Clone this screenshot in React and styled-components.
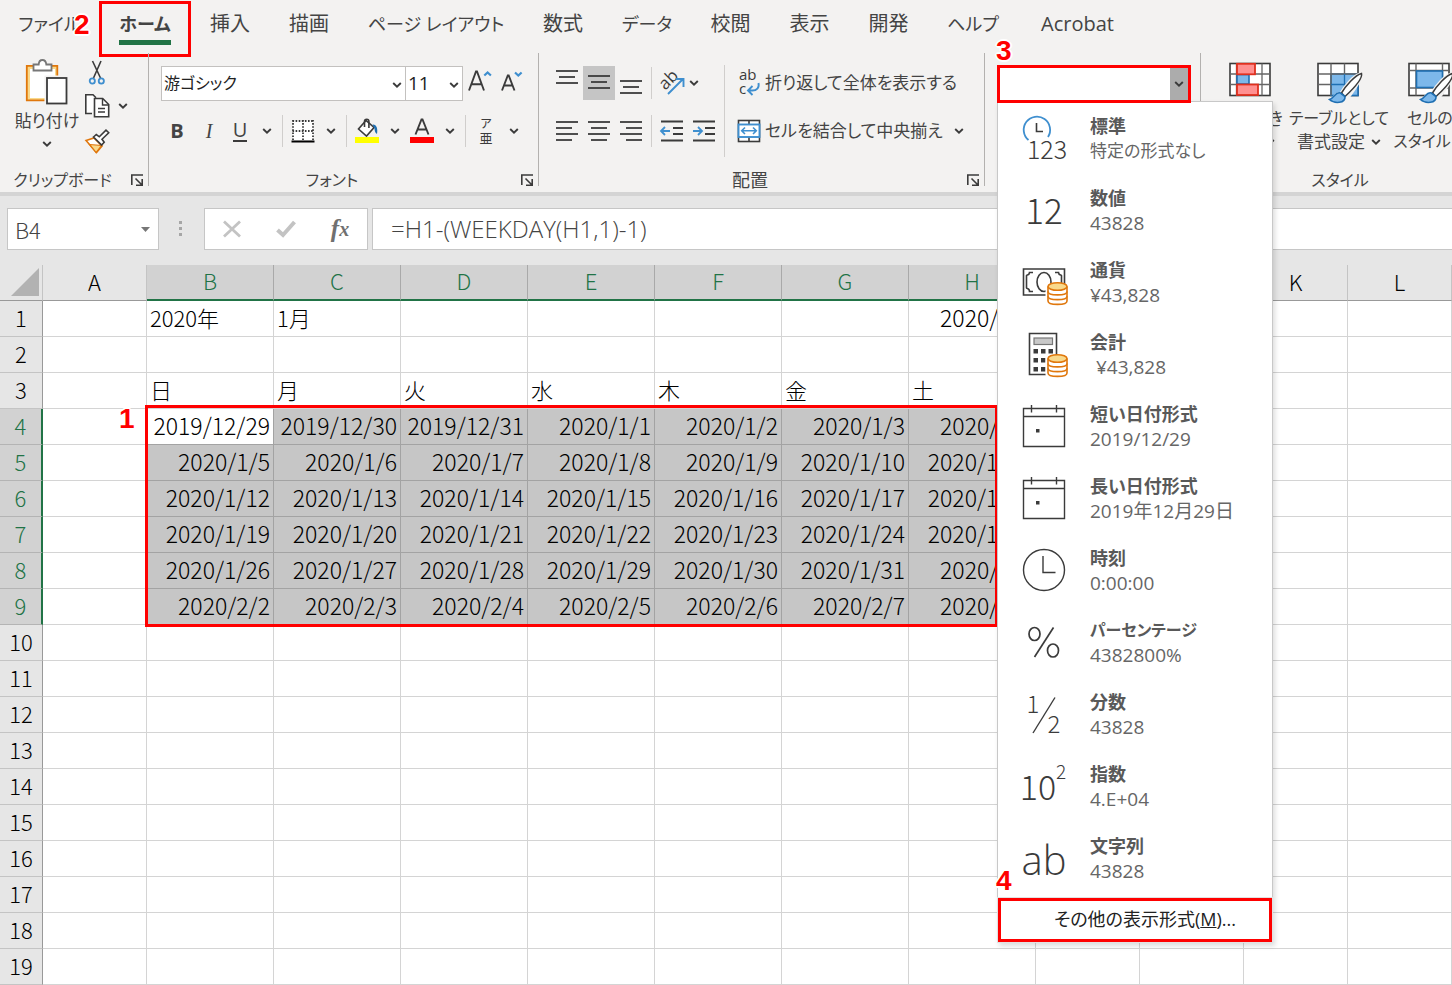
import React from "react";
import styled, { createGlobalStyle, css } from "styled-components";

const INK = "#3b3b3b";
const BLUE = "#3f8fcf";
const GREEN = "#217346";
const RED = "#ff0000";

const uiFont = `"Open Sans", "Noto Sans CJK JP", sans-serif`;
const sheetFont = `"Noto Sans CJK JP", sans-serif`;

const GlobalStyle = createGlobalStyle`
  *, *::before, *::after { box-sizing: border-box; }
  body { margin: 0; background: #fff; }
  button, input, select { font: inherit; color: inherit; margin: 0; font-feature-settings: inherit; }
`;

const Page = styled.div`
  min-height: 100vh;
  overflow: hidden;
  display: flex;
  flex-direction: column;
  background: #fff;
  color: #444;
  font-family: ${uiFont};
  font-feature-settings: "palt";
  font-size: 17px;
  line-height: 24px;
`;

/* ---------- annotations ---------- */

const StepNumber = styled.span`
  position: absolute;
  z-index: 6;
  left: ${(p) => p.$left};
  top: ${(p) => p.$top};
  font: bold 28px/28px "Liberation Sans", sans-serif;
  color: ${RED};
  text-shadow: 2px 0 #fff, -2px 0 #fff, 0 2px #fff, 0 -2px #fff, 1px 1px #fff, -1px -1px #fff,
    1px -1px #fff, -1px 1px #fff;
  pointer-events: none;
`;

/* ---------- ribbon ---------- */

const Ribbon = styled.header`
  background: #f3f2f1;
  border-bottom: 4px solid #d4d4d4;
`;

const TabBar = styled.nav`
  display: flex;
  height: 53px;
`;

const Tab = styled.button`
  position: relative;
  flex: none;
  width: ${(p) => p.$width}px;
  height: 48px;
  padding: 0;
  border: 0;
  background: none;
  font-size: ${(p) => (p.$kana ? 18 : 20)}px;
  line-height: 48px;
  white-space: nowrap;
  display: flex;
  justify-content: center;
  ${(p) =>
    p.$active &&
    css`
      font-weight: 700;
      &::before {
        content: "";
        position: absolute;
        left: 20px;
        right: 20px;
        top: 40px;
        height: 5px;
        background: ${GREEN};
      }
      &::after {
        content: "";
        position: absolute;
        inset: 1px 0 -9px 0;
        border: 3px solid ${RED};
      }
    `}
`;

const Groups = styled.div`
  display: flex;
  height: 139px;
`;

const Group = styled.section`
  position: relative;
  flex: none;
  width: ${(p) => p.$width}px;
  display: flex;
  flex-direction: column;
  &::after {
    content: "";
    position: absolute;
    right: 0;
    top: 0;
    height: 133px;
    width: 1px;
    background: ${(p) => (p.$last ? "transparent" : "#b3b1af")};
  }
`;

const GroupBody = styled.div`
  flex: 1;
  min-height: 0;
  display: flex;
  align-items: flex-start;
  padding: ${(p) => p.$pad || "0"};
`;

const GroupFooter = styled.div`
  display: flex;
  align-items: center;
  height: 24px;
  line-height: 24px;
`;

const GroupName = styled.span`
  flex: 1;
  text-align: center;
  font-size: ${(p) => (p.$kana ? 16 : 18)}px;
`;

const Launcher = styled.button`
  width: 24px;
  height: 24px;
  padding: 0;
  border: 0;
  background: none;
  display: flex;
  align-items: center;
  justify-content: center;
`;

const Stack = styled.div`
  display: flex;
  flex-direction: column;
  padding-left: ${(p) => p.$indent || 0}px;
`;

const ToolRow = styled.div`
  display: flex;
  align-items: center;
  height: 36px;
  margin-top: ${(p) => p.$gap || 0}px;
`;

const ToolButton = styled.button`
  flex: none;
  width: ${(p) => p.$width || 32}px;
  height: ${(p) => p.$height || 34}px;
  padding: 0;
  border: 0;
  background: ${(p) => (p.$pressed ? "#c5c5c5" : "none")};
  display: flex;
  align-items: center;
  justify-content: center;
  font-size: 20px;
  line-height: 24px;
`;

const Letter = styled.span`
  font-weight: ${(p) => (p.$bold ? 700 : 400)};
  font-style: ${(p) => (p.$italic ? "italic" : "normal")};
  font-family: ${(p) => (p.$italic ? `"Liberation Serif", serif` : "inherit")};
  border-bottom: ${(p) => (p.$underline ? `2px solid ${INK}` : "0")};
  line-height: 20px;
`;

const TextButton = styled.button`
  display: flex;
  align-items: center;
  gap: 4px;
  height: 34px;
  padding: 0;
  border: 0;
  background: none;
  font-size: 17px;
  line-height: 24px;
  white-space: nowrap;
`;

const Divider = styled.span`
  flex: none;
  width: 1px;
  height: ${(p) => p.$height || 32}px;
  margin: 0 4px;
  background: #d0cecc;
`;

const Picker = styled.label`
  position: relative;
  display: flex;
  flex: none;
  width: ${(p) => p.$width}px;
  height: 35px;
  margin-right: ${(p) => p.$after || 0}px;
  margin-left: ${(p) => p.$pull || 0}px;
  border: 1px solid #c3c1bf;
  background: #fff;
  color: #222;
  svg {
    position: absolute;
    right: 3px;
    top: 14px;
    pointer-events: none;
  }
  select {
    appearance: none;
    flex: 1;
    min-width: 0;
    border: 0;
    padding: 0 2px;
    background: none;
    font-size: ${(p) => (p.$kana ? 16 : 19)}px;
  }
`;

const BigButton = styled.button`
  flex: none;
  width: ${(p) => p.$width}px;
  padding: 0;
  border: 0;
  background: none;
  display: flex;
  flex-direction: column;
  align-items: center;
  white-space: nowrap;
  > svg {
    margin-bottom: 4px;
  }
`;

const BigLine = styled.span`
  display: flex;
  align-items: center;
  gap: 6px;
  height: 23px;
  font-size: ${(p) => (p.$kana ? 16 : 17)}px;
  line-height: 23px;
`;

/* ---------- number format box and its menu ---------- */

const FormatBox = styled.div`
  position: relative;
  width: 194px;
  height: 38px;
`;

const FormatField = styled.div`
  display: flex;
  height: 38px;
  border: 3px solid ${RED};
  background: #fff;
  position: relative;
  z-index: 5;
  input {
    flex: 1;
    min-width: 0;
    border: 0;
    padding: 0 4px;
    background: #fff;
    outline: none;
  }
  button {
    width: 18px;
    padding: 0;
    border: 0;
    background: #acacac;
    display: flex;
    align-items: center;
    justify-content: center;
  }
`;

const Menu = styled.div`
  position: absolute;
  z-index: 4;
  left: 0;
  top: 36px;
  width: 276px;
  border: 1px solid #c8c8c8;
  background: #fff;
  box-shadow: 2px 3px 5px rgba(0, 0, 0, 0.14);
`;

const MenuItem = styled.button`
  display: flex;
  align-items: center;
  width: 100%;
  height: 72px;
  padding: 0 0 0 22px;
  border: 0;
  background: none;
  text-align: left;
  svg {
    flex: none;
    margin-right: 22px;
  }
`;

const ItemTitle = styled.span`
  display: block;
  font-family: ${sheetFont};
  font-weight: 700;
  font-size: ${(p) => (p.$kana ? 16 : 18)}px;
  line-height: 26px;
  color: #595959;
`;

const ItemSample = styled.span`
  display: block;
  font-size: ${(p) => (p.$kana ? 17 : 19)}px;
  line-height: 26px;
  padding-left: ${(p) => (p.$indent ? 6 : 0)}px;
  color: #666;
  white-space: nowrap;
`;

const MoreFormats = styled.button`
  display: block;
  width: 100%;
  height: 44px;
  margin-top: 4px;
  padding: 0 0 2px 20px;
  border: 3px solid ${RED};
  background: #fff;
  font-size: 18px;
  color: #222;
  outline: 1px solid #e1e1e1;
`;

/* ---------- formula bar ---------- */

const FormulaBar = styled.div`
  display: flex;
  align-items: center;
  height: 69px;
  padding: 0 0 3px 7px;
  background: #e6e6e6;
  font-family: ${sheetFont};
  font-size: 22px;
  font-weight: 300;
`;

const NameBox = styled.div`
  display: flex;
  align-items: center;
  width: 152px;
  height: 42px;
  padding-right: 8px;
  border: 1px solid #c6c6c6;
  background: #fff;
  input {
    flex: 1;
    min-width: 0;
    padding: 0 0 0 7px;
    border: 0;
    background: none;
    outline: none;
  }
`;

const Grip = styled.span`
  width: 3px;
  height: 16px;
  margin: 0 22px 0 20px;
  background: repeating-linear-gradient(#a6a6a6 0 3px, transparent 3px 6px);
`;

const FormulaTools = styled.div`
  display: flex;
  align-items: center;
  width: 164px;
  height: 42px;
  border: 1px solid #c6c6c6;
  background: #fff;
  button {
    flex: 1;
    height: 40px;
    padding: 0;
    border: 0;
    background: none;
    display: flex;
    align-items: center;
    justify-content: center;
    font: italic bold 25px/36px "Liberation Serif", serif;
    color: #707070;
  }
  small {
    font-size: 20px;
  }
`;

const FormulaInput = styled.input`
  flex: 1;
  min-width: 0;
  height: 42px;
  margin-left: 4px;
  padding: 0 18px 2px;
  border: 1px solid #c6c6c6;
  border-right: 0;
  background: #fff;
  outline: none;
  && {
    font-family: ${uiFont};
    font-size: 24px;
  }
`;

/* ---------- sheet ---------- */

const SheetArea = styled.main`
  position: relative;
`;

const Sheet = styled.table`
  width: 100%;
  table-layout: fixed;
  border-collapse: separate;
  border-spacing: 0;
  font-family: ${sheetFont};
  font-feature-settings: normal;
  font-size: 22px;
  font-weight: 300;
  line-height: 30px;
  color: #000;
  td,
  th {
    height: 36px;
    padding: 0 3px 4px;
    white-space: nowrap;
    font-weight: 300;
  }
`;

const ColumnHead = styled.th`
  border-right: 1px solid ${(p) => (p.$on ? "#a9a9a9" : "#c4c4c4")};
  border-bottom: ${(p) => (p.$on ? `2px solid ${GREEN}` : "1px solid #999")};
  background: ${(p) => (p.$on ? "#d2d2d2" : "#e6e6e6")};
  color: ${(p) => (p.$on ? GREEN : "#000")};
`;

const RowHead = styled.th`
  border-right: ${(p) => (p.$on ? `2px solid ${GREEN}` : "1px solid #999")};
  border-bottom: 1px solid ${(p) => (p.$on ? "#b4b4b4" : "#c4c4c4")};
  background: ${(p) => (p.$on ? "#d2d2d2" : "#e6e6e6")};
  color: ${(p) => (p.$on ? GREEN : "#000")};
`;

const Corner = styled.th`
  border-right: 1px solid #c4c4c4;
  border-bottom: 1px solid #999;
  background: #e6e6e6;
  vertical-align: bottom;
  svg {
    display: block;
    margin-left: auto;
  }
`;

const Cell = styled.td`
  border-right: 1px solid ${(p) => (p.$picked ? "#a3a3a3" : "#d4d4d4")};
  border-bottom: 1px solid ${(p) => (p.$picked ? "#a3a3a3" : "#d4d4d4")};
  background: ${(p) => (p.$picked && !p.$current ? "#c6c6c6" : "#fff")};
  text-align: ${(p) => (p.$date ? "right" : "left")};
  font-size: ${(p) => (p.$date ? 23 : 22)}px;
`;

const RangeFrame = styled.div`
  position: absolute;
  left: 145px;
  top: 140px;
  width: 853px;
  height: 222px;
  border: 3px solid ${RED};
  pointer-events: none;
`;

/* ---------- icons ---------- */

const Drawing = styled.svg`
  flex: none;
  overflow: visible;
`;

const Icon = ({ w, h, children, ...rest }) => (
  <Drawing width={w} height={h} viewBox={`0 0 ${w} ${h}`} fill="none" stroke={INK} strokeWidth="1.6" aria-hidden="true" {...rest}>
    {children}
  </Drawing>
);

const Chevron = () => (
  <Icon w={10} h={8} strokeWidth="1.9">
    <path d="M1.2 2l3.8 3.7L8.8 2" />
  </Icon>
);

const LauncherIcon = () => (
  <Icon w={14} h={14}>
    <path d="M1.8 12V2H13M5.500 5.500l6 6M12.200 6v6.200H6" />
  </Icon>
);

const PasteIcon = () => (
  <Icon w={44} h={47}>
    <rect x="3.500" y="9.500" width="28" height="32" fill="#fff" stroke="#f9d98b" strokeWidth="3" />
    <path d="M9 7.800H1.800v34.500h18M26 7.800h6.300V19" stroke="#e0770c" strokeWidth="1.800" />
    <path d="M8.500 12.500v-6h5.200c.4-6 7-6 7.600 0h5.200v6z" fill="#fff" stroke="#777" strokeWidth="1.800" />
    <rect x="19.500" y="17.500" width="24" height="29.500" fill="#f3f2f1" stroke="none" />
    <rect x="22" y="20" width="19.500" height="25.500" fill="#fff" strokeWidth="1.800" />
  </Icon>
);

const ScissorsIcon = () => (
  <Icon w={18} h={26}>
    <path d="M4.500 1l8 17M13 1L5.500 18" />
    <circle cx="4.300" cy="21" r="2.600" stroke={BLUE} strokeWidth="1.800" />
    <circle cx="13.300" cy="21" r="2.600" stroke={BLUE} strokeWidth="1.800" />
  </Icon>
);

const CopyIcon = () => (
  <Icon w={26} h={26}>
    <path d="M8 20.500H1.800V1.800H9l3 3" fill="#fff" />
    <path d="M10.500 5.500h8.200l6 6V23.700h-14.200z" fill="#fff" />
    <path d="M18.500 6v6h6M14 15.500h7M14 19h7" strokeWidth="1.400" />
  </Icon>
);

const PainterIcon = () => (
  <Icon w={26} h={26}>
    <path d="M2 12.500l8-2.500 8 8-5.500 6.500z" fill="#fff" stroke="#e0770c" />
    <path d="M5.500 16.500l12 1-5.500 7z" fill="#f9d98b" stroke="#e0770c" strokeWidth="1.200" />
    <path d="M9.500 9l2.800-2.500 3 2.300L22 2.200l2.700 2.500-6.700 6.600 2.200 3-2.600 2.800z" fill="#fff" />
  </Icon>
);

const GrowIcon = ({ small }) => (
  <Icon w={26} h={28}>
    {small ? (
      <>
        <path d="M3 21.500L8.800 6.500h.9L15.500 21.500M5 16.500h8.500" strokeWidth="1.900" />
        <path d="M16 3.500l3.300 3 3.300-3" stroke={BLUE} strokeWidth="2.200" />
      </>
    ) : (
      <>
        <path d="M2 21.500L9 2.500h1l7 19M4.500 15.200h10" strokeWidth="1.900" />
        <path d="M17.300 6.500l3.300-3 3.300 3" stroke={BLUE} strokeWidth="2.200" />
      </>
    )}
  </Icon>
);

const BordersIcon = () => (
  <Icon w={24} h={24}>
    <rect x="2" y="2" width="20" height="19" fill="#fff" stroke="none" />
    <path d="M1.500 2h21M1.500 12h21M2 1v20M12 1v20M22 1v20" strokeWidth="1.800" strokeDasharray="1.600 1.500" />
    <path d="M.5 22.500h23" stroke="#000" strokeWidth="2" />
  </Icon>
);

const FillIcon = () => (
  <Icon w={26} h={26}>
    <path d="M12 2.500L4.500 11l8 7 7.500-8.500z" fill="#fff" />
    <path d="M10.500 9V3.500a2.200 2.200 0 0 1 4.400 0V10" />
    <path d="M18.500 6.500c4-.5 5.500 4 4.500 9.500-2-1-2.500-4-2.500-5.500z" fill="#1f6fb2" stroke="none" />
    <rect x="1" y="19" width="24" height="6" fill="#ffff00" stroke="none" />
  </Icon>
);

const FontColorIcon = () => (
  <Icon w={26} h={26}>
    <path d="M6.500 16.500L12.500 1.500h1l6 15M8.500 11.500h9" strokeWidth="1.900" />
    <rect x="1" y="19" width="24" height="6" fill="#ff0000" stroke="none" />
  </Icon>
);

const RubyIcon = () => (
  <Icon w={16} h={28}>
    <text x="8" y="11" fontSize="12" textAnchor="middle" fill={INK} stroke="none">ア</text>
    <text x="8" y="26" fontSize="13" textAnchor="middle" fill={INK} stroke="none">亜</text>
  </Icon>
);

const LinesIcon = ({ lines, h = 34 }) => (
  <Icon w={24} h={h} strokeWidth="1.800">
    {lines.map(([x1, x2, y]) => (
      <path key={y} d={`M${x1} ${y}H${x2}`} />
    ))}
  </Icon>
);

const OrientationIcon = () => (
  <Icon w={28} h={30}>
    <text x="2" y="20" fontSize="17" fill={INK} stroke="none" transform="rotate(-45 8 15)">ab</text>
    <path d="M10 26L25 11M17.500 11H25.500v8" stroke={BLUE} strokeWidth="1.900" />
  </Icon>
);

const IndentIcon = ({ out }) => (
  <Icon w={24} h={22} strokeWidth="1.800">
    <path d="M1 1.500h22M13 8h10M13 14h10M1 20.500h22" />
    {out ? (
      <path d="M10 11H1.800M5 7l-4 4 4 4" stroke={BLUE} />
    ) : (
      <path d="M1 11h8.200M6 7l4 4-4 4" stroke={BLUE} />
    )}
  </Icon>
);

const WrapIcon = () => (
  <Icon w={24} h={28}>
    <text x="2" y="11" fontSize="15" fill={INK} stroke="none">ab</text>
    <text x="2" y="25" fontSize="15" fill={INK} stroke="none">c</text>
    <path d="M21.500 14c1 5-2 7.500-6 7.500H12M15.500 17L11 21.500l4.500 4.500" stroke={BLUE} strokeWidth="1.900" />
  </Icon>
);

const MergeIcon = () => (
  <Icon w={24} h={24}>
    <rect x="1.500" y="1.500" width="21" height="21" fill="#fff" />
    <path d="M12 1v5M12 18v5" />
    <rect x="1.500" y="5.500" width="21" height="12.500" fill="#fff" stroke={BLUE} strokeWidth="1.900" />
    <path d="M5 11.800h14M8 8.500l-3.300 3.300L8 15M16 8.500l3.300 3.300L16 15" stroke={BLUE} />
  </Icon>
);

const ConditionalIcon = () => (
  <Icon w={44} h={42}>
    <rect x="2" y="2.500" width="40" height="32" fill="#fff" />
    <path d="M2 13h40M2 23.500h40M8.500 2.500v32M34 2.500v32" stroke="#666" strokeWidth="1.300" />
    <rect x="9" y="13.500" width="12" height="9.500" fill="#7db8ea" stroke="#1f6fb2" />
    <rect x="9" y="2.800" width="18" height="10.500" fill="#ff9090" stroke="#e0301e" strokeWidth="1.800" />
    <rect x="9" y="23.500" width="21" height="10.500" fill="#ff9090" stroke="#e0301e" strokeWidth="1.800" />
  </Icon>
);

const BrushMark = () => (
  <>
    <path d="M45 13.500c-7 2-15 12-19 19-4-.5-6 1.500-8.500 6.500 5 3 12 3 14.500-1.500C37 31 45 21 46 13.500z" fill="#f3f2f1" stroke="#f3f2f1" strokeWidth="3.500" />
    <path d="M46.500 12.500C40 14 30 26 26.500 32l3.500 3.500C37 29 48 18 46.500 12.500z" fill="#fff" strokeWidth="1.500" />
    <path d="M25.500 32c-5-2-6 5-11 6.500 5 4.500 16 4 15.500-3z" fill="#7db8ea" stroke="#1f6fb2" />
  </>
);

const TableStyleIcon = () => (
  <Icon w={48} h={42}>
    <rect x="3" y="2.500" width="40" height="32" fill="#fff" />
    <rect x="16" y="13" width="27" height="21.500" fill="#7db8ea" stroke="#1f6fb2" />
    <path d="M3 13h40M3 23.500h13M16 2.500v32M29.500 2.500V13" stroke="#666" strokeWidth="1.400" />
    <path d="M16 23.500h27M29.500 13v21" stroke="#1f6fb2" strokeWidth="1.300" />
    <BrushMark />
  </Icon>
);

const CellStyleIcon = () => (
  <Icon w={48} h={42}>
    <rect x="3" y="2.500" width="40" height="32" fill="#fff" />
    <path d="M3 9.500h40M3 27h40M10 2.500v32M36.500 2.500v32" stroke="#666" strokeWidth="1.400" />
    <rect x="10.500" y="10" width="26" height="16.500" fill="#7db8ea" stroke="#1f6fb2" />
    <BrushMark />
  </Icon>
);

const GlyphText = styled.text`
  font-family: ${(p) => (p.$latin ? uiFont : sheetFont)};
  font-weight: 300;
  text-anchor: middle;
  fill: ${INK};
  stroke: none;
`;

const Coins = () => (
  <g stroke="#e0770c" fill="#fff">
    <path d="M28 30v15c0 4.500 19 4.500 19 0V30z" stroke="#fff" strokeWidth="5" />
    <path d="M28 28.500V43c0 4.500 19 4.500 19 0V28.500" />
    <path d="M28 33.500c0 4.500 19 4.500 19 0M28 38.200c0 4.500 19 4.500 19 0" fill="none" />
    <ellipse cx="37.500" cy="28.500" rx="9.500" ry="3.800" fill="#f9d98b" />
  </g>
);

const CalendarIcon = () => (
  <Icon w={48} h={48} strokeWidth="1.400">
    <path d="M3.500 6.500h41v38h-41zM3.500 14.500h41M11.500 3v7.500M36.500 3v7.500" />
    <rect x="16" y="27" width="3.500" height="3.500" fill={INK} stroke="none" />
  </Icon>
);

const menuIcons = {
  general: (
    <Icon w={48} h={48}>
      <path d="M8.500 26A13.200 13.200 0 1 1 28 23" stroke={BLUE} strokeWidth="1.800" />
      <path d="M16.500 9v8.500H23" />
      <GlyphText x="27" y="45" fontSize="25">123</GlyphText>
    </Icon>
  ),
  number: (
    <Icon w={48} h={48}>
      <GlyphText x="24" y="38" fontSize="35">12</GlyphText>
    </Icon>
  ),
  currency: (
    <Icon w={48} h={48}>
      <path d="M3.500 11h41v26h-41z" />
      <path d="M13 14.500H9.500c0 3-3 2-3 3V30c0 1 3 0 3 3.500H13M35 14.500h3.500c0 3 3 2 3 3V26" />
      <ellipse cx="24" cy="24" rx="7" ry="9.500" />
      <Coins />
    </Icon>
  ),
  accounting: (
    <Icon w={48} h={48}>
      <path d="M9.500 3.500h27v41h-27z" />
      <rect x="14" y="8" width="18.500" height="6.500" fill="#c8c8c8" stroke="#777" strokeWidth="1.200" />
      {[19, 28, 37].map((y) =>
        [13.500, 21, 28.500].map((x) => (
          <rect key={`${x}-${y}`} x={x} y={y} width="4.500" height="4.500" fill={INK} stroke="none" />
        ))
      )}
      <Coins />
    </Icon>
  ),
  date: <CalendarIcon />,
  time: (
    <Icon w={48} h={48} strokeWidth="1.400">
      <circle cx="24" cy="24" r="20.500" />
      <path d="M23 10v16.500h12.500" />
    </Icon>
  ),
  percent: (
    <Icon w={48} h={48} strokeWidth="1.700">
      <ellipse cx="14.500" cy="16" rx="5.500" ry="6.500" />
      <ellipse cx="33" cy="32.500" rx="5.500" ry="6.500" />
      <path d="M33.500 9.500L14.500 39" />
    </Icon>
  ),
  fraction: (
    <Icon w={48} h={48}>
      <GlyphText x="13" y="23" fontSize="24">1</GlyphText>
      <GlyphText x="34" y="43" fontSize="24">2</GlyphText>
      <path d="M35 7.500L13 43" strokeWidth="1.400" />
    </Icon>
  ),
  scientific: (
    <Icon w={48} h={48}>
      <GlyphText x="18" y="38" fontSize="34">10</GlyphText>
      <GlyphText x="41" y="17" fontSize="19">2</GlyphText>
    </Icon>
  ),
  text: (
    <Icon w={48} h={48}>
      <GlyphText $latin x="24" y="41" fontSize="40">ab</GlyphText>
    </Icon>
  ),
};

/* ---------- data ---------- */

const tabs = [
  ["ファイル", 99],
  ["ホーム", 92],
  ["挿入", 78],
  ["描画", 80],
  ["ページ レイアウト", 174],
  ["数式", 80],
  ["データ", 88],
  ["校閲", 79],
  ["表示", 79],
  ["開発", 79],
  ["ヘルプ", 90],
  ["Acrobat", 119],
];

const formats = [
  { icon: "general", title: "標準", sample: "特定の形式なし" },
  { icon: "number", title: "数値", sample: "43828" },
  { icon: "currency", title: "通貨", sample: "¥43,828" },
  { icon: "accounting", title: "会計", sample: "¥43,828", indent: true },
  { icon: "date", title: "短い日付形式", sample: "2019/12/29" },
  { icon: "date", title: "長い日付形式", sample: "2019年12月29日" },
  { icon: "time", title: "時刻", sample: "0:00:00" },
  { icon: "percent", title: "パーセンテージ", sample: "4382800%" },
  { icon: "fraction", title: "分数", sample: "43828" },
  { icon: "scientific", title: "指数", sample: "4.E+04" },
  { icon: "text", title: "文字列", sample: "43828" },
];

/* Katakana and hiragana labels are set a little smaller than kanji ones. */
const allKatakana = (text) => /^[ァ-ー ]+$/.test(text);
const hasHiragana = (text) => /[ぁ-ん]/.test(text);

const columns = ["A", "B", "C", "D", "E", "F", "G", "H", "I", "J", "K", "L"];
const wide = "BCDEFGH";

const cells = {
  1: { B: "2020年", C: "1月", H: "2020/1/1" },
  3: { B: "日", C: "月", D: "火", E: "水", F: "木", G: "金", H: "土" },
};
const firstDay = Date.UTC(2019, 11, 29);
for (let week = 0; week < 6; week++) {
  cells[4 + week] = {};
  [...wide].forEach((col, day) => {
    const d = new Date(firstDay + (week * 7 + day) * 86400000);
    cells[4 + week][col] = `${d.getUTCFullYear()}/${d.getUTCMonth() + 1}/${d.getUTCDate()}`;
  });
}

/* ---------- sections ---------- */

const Footer = ({ name, launcher = true }) => (
  <GroupFooter>
    <GroupName $kana={allKatakana(name)}>{name}</GroupName>
    {launcher && (
      <Launcher aria-label={`${name}の設定`}>
        <LauncherIcon />
      </Launcher>
    )}
  </GroupFooter>
);

const Drop = ({ label, width = 23 }) => (
  <ToolButton $width={width} aria-label={label}>
    <Chevron />
  </ToolButton>
);

const ClipboardGroup = () => (
  <Group $width={149}>
    <GroupBody $pad="5px 0 0 14px">
      <BigButton $width={66}>
        <PasteIcon />
        <BigLine>貼り付け</BigLine>
        <BigLine><Chevron /></BigLine>
      </BigButton>
      <Stack>
        <ToolButton $width={34} $height={30} aria-label="切り取り"><ScissorsIcon /></ToolButton>
        <ToolRow>
          <ToolButton $width={34} aria-label="コピー"><CopyIcon /></ToolButton>
          <Drop label="コピーのオプション" width={18} />
        </ToolRow>
        <ToolButton $width={34} aria-label="書式のコピー"><PainterIcon /></ToolButton>
      </Stack>
    </GroupBody>
    <Footer name="クリップボード" />
  </Group>
);

const FontGroup = () => (
  <Group $width={390}>
    <GroupBody $pad="12px 0 0 12px">
      <Stack>
        <ToolRow>
          <Picker $width={245} $kana>
            <select aria-label="フォント名" defaultValue="a"><option value="a">游ゴシック</option></select>
            <Chevron />
          </Picker>
          <Picker $width={58} $pull={-1} $after={1}>
            <select aria-label="フォント サイズ" defaultValue="11"><option>11</option></select>
            <Chevron />
          </Picker>
          <ToolButton aria-label="フォント サイズの拡大"><GrowIcon /></ToolButton>
          <ToolButton aria-label="フォント サイズの縮小"><GrowIcon small /></ToolButton>
        </ToolRow>
        <ToolRow $gap={12}>
          <ToolButton aria-label="太字"><Letter $bold>B</Letter></ToolButton>
          <ToolButton aria-label="斜体"><Letter $italic>I</Letter></ToolButton>
          <ToolButton $width={30} aria-label="下線"><Letter $underline>U</Letter></ToolButton>
          <Drop label="下線の種類" />
          <Divider />
          <ToolButton aria-label="罫線"><BordersIcon /></ToolButton>
          <Drop label="罫線の種類" />
          <Divider />
          <ToolButton aria-label="塗りつぶしの色"><FillIcon /></ToolButton>
          <Drop label="塗りつぶしの色を選ぶ" />
          <ToolButton aria-label="フォントの色"><FontColorIcon /></ToolButton>
          <Drop label="フォントの色を選ぶ" />
          <Divider />
          <ToolButton aria-label="ふりがな"><RubyIcon /></ToolButton>
          <Drop label="ふりがなの設定" />
        </ToolRow>
      </Stack>
    </GroupBody>
    <Footer name="フォント" />
  </Group>
);

const AlignmentGroup = () => (
  <Group $width={446}>
    <GroupBody $pad="12px 0 0 12px">
      <Stack>
        <ToolRow>
          <ToolButton aria-label="上揃え"><LinesIcon lines={[[1, 23, 5], [4, 20, 11], [1, 23, 17]]} /></ToolButton>
          <ToolButton $pressed aria-label="上下中央揃え"><LinesIcon lines={[[1, 23, 10], [4, 20, 16], [1, 23, 22]]} /></ToolButton>
          <ToolButton aria-label="下揃え"><LinesIcon lines={[[1, 23, 15], [4, 20, 21], [1, 23, 27]]} /></ToolButton>
          <Divider />
          <ToolButton aria-label="方向"><OrientationIcon /></ToolButton>
          <Drop label="方向の設定" width={12} />
        </ToolRow>
        <ToolRow $gap={12}>
          <ToolButton aria-label="左揃え"><LinesIcon h={22} lines={[[1, 23, 2], [1, 17, 8], [1, 23, 14], [1, 17, 20]]} /></ToolButton>
          <ToolButton aria-label="中央揃え"><LinesIcon h={22} lines={[[1, 23, 2], [4, 20, 8], [1, 23, 14], [4, 20, 20]]} /></ToolButton>
          <ToolButton aria-label="右揃え"><LinesIcon h={22} lines={[[1, 23, 2], [7, 23, 8], [1, 23, 14], [7, 23, 20]]} /></ToolButton>
          <Divider />
          <ToolButton aria-label="インデントを減らす"><IndentIcon out /></ToolButton>
          <ToolButton aria-label="インデントを増やす"><IndentIcon /></ToolButton>
        </ToolRow>
      </Stack>
      <Divider $height={92} />
      <Stack $indent={8}>
        <ToolRow>
          <TextButton><WrapIcon />折り返して全体を表示する</TextButton>
        </ToolRow>
        <ToolRow $gap={12}>
          <TextButton><MergeIcon />セルを結合して中央揃え</TextButton>
          <Drop label="セル結合の種類" width={32} />
        </ToolRow>
      </Stack>
    </GroupBody>
    <Footer name="配置" />
  </Group>
);

const NumberGroup = () => (
  <Group $width={216}>
    <GroupBody $pad="12px 0 0 12px">
      <FormatBox>
        <StepNumber $left="-1px" $top="-28px">3</StepNumber>
        <FormatField>
          <input aria-label="表示形式" />
          <button aria-label="表示形式の一覧"><Chevron /></button>
        </FormatField>
        <Menu>
          {formats.map((f) => (
            <MenuItem key={f.title}>
              {menuIcons[f.icon]}
              <span>
                <ItemTitle $kana={allKatakana(f.title)}>{f.title}</ItemTitle>
                <ItemSample $kana={hasHiragana(f.sample)} $indent={f.indent}>{f.sample}</ItemSample>
              </span>
            </MenuItem>
          ))}
          <MoreFormats>その他の表示形式(<u>M</u>)...</MoreFormats>
          <StepNumber $left="-2px" $top="765px">4</StepNumber>
        </Menu>
      </FormatBox>
    </GroupBody>
  </Group>
);

const StylesGroup = () => (
  <Group $width={278} $last>
    <GroupBody $pad="8px 0 0 13px">
      <BigButton $width={72}>
        <ConditionalIcon />
        <BigLine>条件付き</BigLine>
        <BigLine>書式<Chevron /></BigLine>
      </BigButton>
      <BigButton $width={106}>
        <TableStyleIcon />
        <BigLine $kana>テーブルとして</BigLine>
        <BigLine>書式設定<Chevron /></BigLine>
      </BigButton>
      <BigButton $width={76}>
        <CellStyleIcon />
        <BigLine $kana>セルの</BigLine>
        <BigLine $kana>スタイル<Chevron /></BigLine>
      </BigButton>
    </GroupBody>
    <Footer name="スタイル" launcher={false} />
  </Group>
);

export default function App() {
  return (
    <Page>
      <GlobalStyle />
      <Ribbon>
        <TabBar>
          {tabs.map(([name, width]) => (
            <Tab key={name} $width={width} $kana={allKatakana(name)} $active={name === "ホーム"}>
              {name}
              {name === "ファイル" && <StepNumber $left="74px" $top="11px">2</StepNumber>}
            </Tab>
          ))}
        </TabBar>
        <Groups>
          <ClipboardGroup />
          <FontGroup />
          <AlignmentGroup />
          <NumberGroup />
          <StylesGroup />
        </Groups>
      </Ribbon>

      <FormulaBar>
        <NameBox>
          <input aria-label="名前ボックス" defaultValue="B4" />
          <svg width="9" height="5" viewBox="0 0 9 5" aria-hidden="true"><path d="M0 0h9L4.500 5z" fill="#777" /></svg>
        </NameBox>
        <Grip />
        <FormulaTools>
          <button aria-label="キャンセル">
            <Icon w={20} h={18} stroke="#c3c3c3" strokeWidth="2.800"><path d="M2 1.500l16 15M18 1.500l-16 15" /></Icon>
          </button>
          <button aria-label="入力">
            <Icon w={20} h={18} stroke="#c3c3c3" strokeWidth="4"><path d="M1.500 10l5.500 5L18.500 2" /></Icon>
          </button>
          <button aria-label="関数の挿入">f<small>x</small></button>
        </FormulaTools>
        <FormulaInput aria-label="数式バー" defaultValue="=H1-(WEEKDAY(H1,1)-1)" />
      </FormulaBar>

      <SheetArea>
        <Sheet>
          <colgroup>
            <col width="43" />
            {columns.map((c) => (
              <col key={c} width={wide.includes(c) ? 127 : 104} />
            ))}
          </colgroup>
          <thead>
            <tr>
              <Corner>
                <svg width="28" height="28" viewBox="0 0 28 28" aria-hidden="true"><path d="M28 0v28H0z" fill="#b2b2b2" /></svg>
              </Corner>
              {columns.map((c) => (
                <ColumnHead key={c} scope="col" $on={wide.includes(c)}>{c}</ColumnHead>
              ))}
            </tr>
          </thead>
          <tbody>
            {Array.from({ length: 19 }, (_, i) => i + 1).map((row) => {
              const inRange = row >= 4 && row <= 9;
              return (
                <tr key={row}>
                  <RowHead scope="row" $on={inRange}>{row}</RowHead>
                  {columns.map((c) => {
                    const value = cells[row]?.[c] || "";
                    return (
                      <Cell
                        key={c}
                        $picked={inRange && wide.includes(c)}
                        $current={row === 4 && c === "B"}
                        $date={value.includes("/")}
                      >
                        {value}
                      </Cell>
                    );
                  })}
                </tr>
              );
            })}
          </tbody>
        </Sheet>
        <RangeFrame />
        <StepNumber $left="119px" $top="140px">1</StepNumber>
      </SheetArea>
    </Page>
  );
}
